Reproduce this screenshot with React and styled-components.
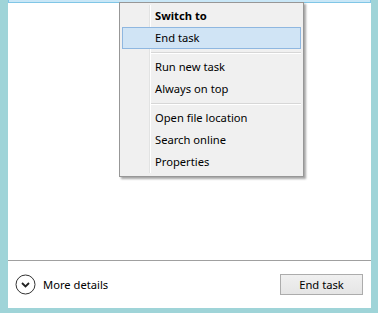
import styled, { createGlobalStyle } from "styled-components";

const Global = createGlobalStyle`
  html, body {
    margin: 0;
    padding: 0;
    background: #9fd4d8;
  }
  body {
    font-family: "Noto Sans", "Open Sans", sans-serif;
    font-size: 11.2px;
    color: #000;
  }
`;

const Frame = styled.div`
  width: 378px;
  height: 313px;
  box-sizing: border-box;
  padding: 0 7px 5px 8px;
  background: #9fd4d8;
  display: flex;
`;

const Content = styled.div`
  position: relative;
  flex: 1;
  background: #fff;
  display: flex;
  flex-direction: column;
`;

const List = styled.div`
  flex: 1;
`;

const SelectedRow = styled.div`
  height: 2px;
  background: #c9e7f7;
  border: 1px solid #80c6e6;
  border-top: none;
`;

const Footer = styled.div`
  height: 47px;
  border-top: 1px solid #a0a0a0;
  display: flex;
  align-items: center;
  justify-content: space-between;
  padding: 0 8px 0 7px;
`;

const Details = styled.div`
  display: flex;
  align-items: center;
  gap: 7px;
`;

const Button = styled.button`
  width: 83px;
  height: 21px;
  box-sizing: border-box;
  border: 1px solid #acacac;
  background: linear-gradient(#f0f0f0, #e5e5e5);
  font-family: inherit;
  font-size: 11.2px;
  color: #000;
  padding: 0;
  margin-top: -1px;
`;

const Menu = styled.div`
  position: absolute;
  left: 111px;
  top: 2px;
  width: 185px;
  box-sizing: border-box;
  padding: 2px 2px 3px;
  background: #f0f0f0;
  border: 1px solid #979797;
  box-shadow: 2px 2px 2px rgba(0, 0, 0, 0.35);
  &::before {
    content: "";
    position: absolute;
    left: 29px;
    top: 2px;
    bottom: 3px;
    width: 1px;
    background: #e2e3e3;
    border-right: 1px solid #fff;
  }
`;

const Item = styled.div`
  position: relative;
  height: 22px;
  box-sizing: border-box;
  display: flex;
  align-items: center;
  padding-left: 32px;
  padding-bottom: 1px;
  border: 1px solid ${(p) => (p.active ? "#8fb7e0" : "transparent")};
  background: ${(p) => (p.active ? "#d0e4f5" : "transparent")};
  font-weight: ${(p) => (p.bold ? 700 : 400)};
  z-index: 1;
`;

const Separator = styled.div`
  height: 7px;
  display: flex;
  align-items: center;
  padding-left: 29px;
  &::after {
    content: "";
    flex: 1;
    height: 1px;
    background: #d7d7d7;
    border-bottom: 1px solid #fff;
  }
`;

const ChevronCircle = () => (
  <svg width="21" height="21" viewBox="0 0 21 21">
    <circle cx="10.5" cy="10.5" r="9.5" fill="none" stroke="#333" strokeWidth="1" />
    <path d="M7 9 L10.5 12.5 L14 9" fill="none" stroke="#222" strokeWidth="1.8" />
  </svg>
);

export default function App() {
  return (
    <>
      <Global />
      <Frame>
        <Content>
          <List>
            <SelectedRow />
          </List>
          <Footer>
            <Details>
              <ChevronCircle />
              <span>More details</span>
            </Details>
            <Button>End task</Button>
          </Footer>
          <Menu>
            <Item bold>Switch to</Item>
            <Item active>End task</Item>
            <Separator />
            <Item>Run new task</Item>
            <Item>Always on top</Item>
            <Separator />
            <Item>Open file location</Item>
            <Item>Search online</Item>
            <Item>Properties</Item>
          </Menu>
        </Content>
      </Frame>
    </>
  );
}
